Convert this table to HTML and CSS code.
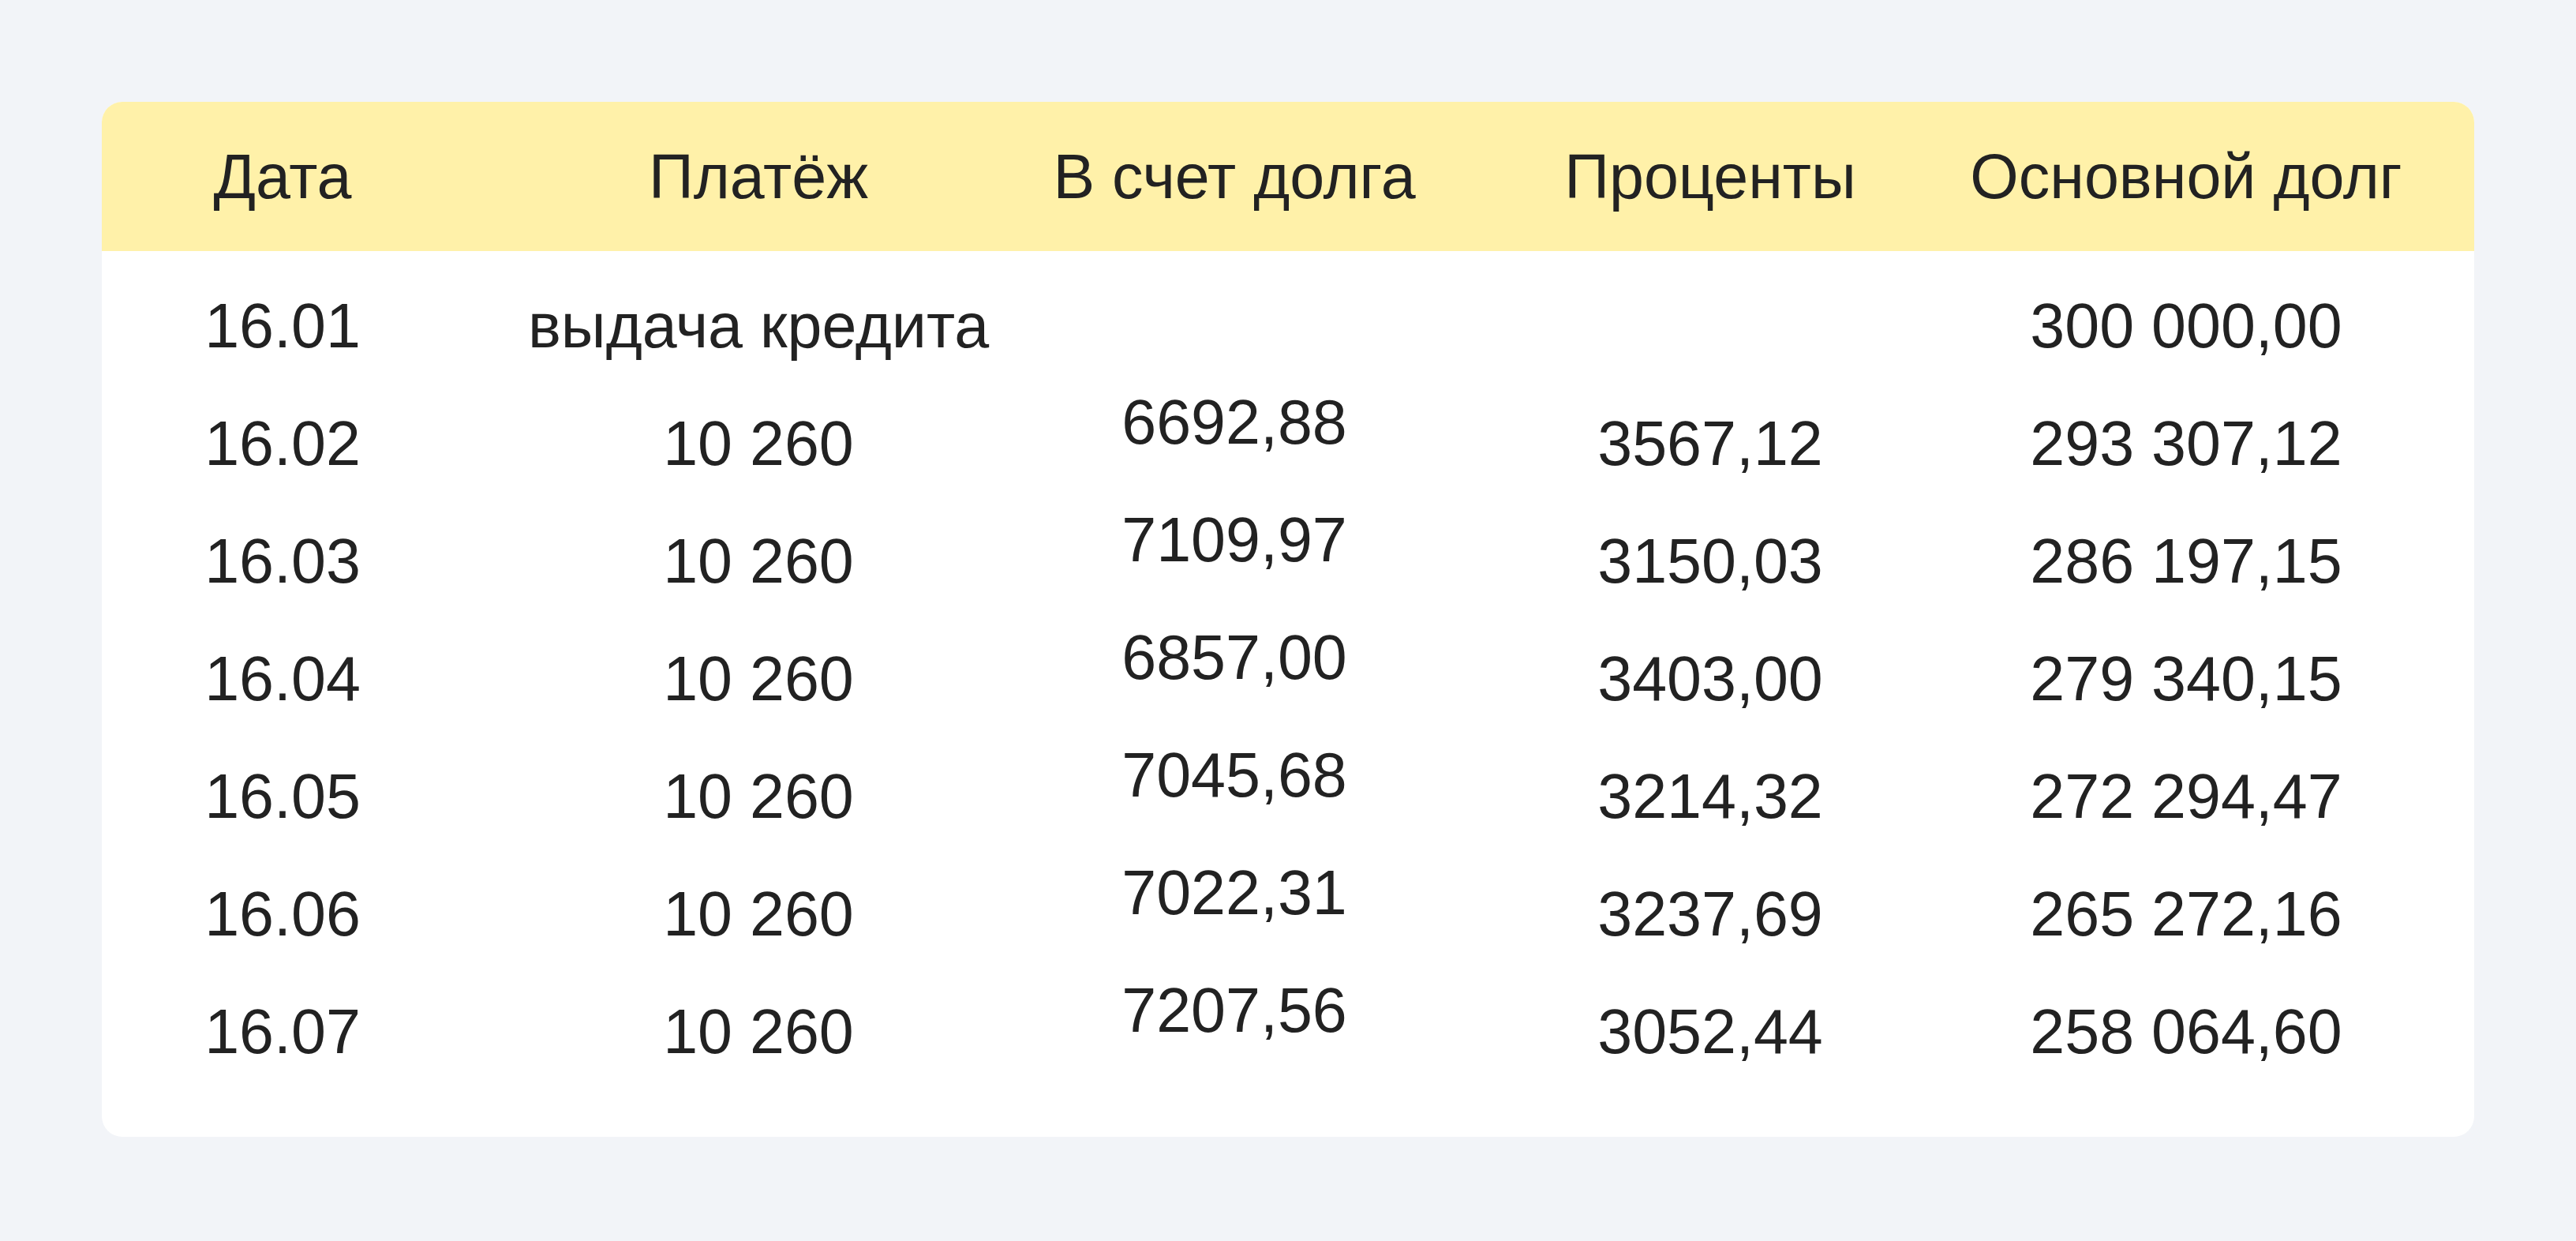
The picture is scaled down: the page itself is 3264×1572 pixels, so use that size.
FILE: index.html
```html
<!DOCTYPE html>
<html lang="ru">
<head>
<meta charset="utf-8">
<title>График платежей</title>
<link rel="stylesheet" href="styles.css">
</head>
<body>
<div class="page">
  <div class="card">
    <div class="row head">
      <div class="cell">Дата</div>
      <div class="cell">Платёж</div>
      <div class="cell">В счет долга</div>
      <div class="cell">Проценты</div>
      <div class="cell">Основной долг</div>
    </div>
    <div class="body">
      <div class="row">
        <div class="cell">16.01</div>
        <div class="cell">выдача кредита</div>
        <div class="cell up"></div>
        <div class="cell"></div>
        <div class="cell">300 000,00</div>
      </div>
      <div class="row">
        <div class="cell">16.02</div>
        <div class="cell">10 260</div>
        <div class="cell up">6692,88</div>
        <div class="cell">3567,12</div>
        <div class="cell">293 307,12</div>
      </div>
      <div class="row">
        <div class="cell">16.03</div>
        <div class="cell">10 260</div>
        <div class="cell up">7109,97</div>
        <div class="cell">3150,03</div>
        <div class="cell">286 197,15</div>
      </div>
      <div class="row">
        <div class="cell">16.04</div>
        <div class="cell">10 260</div>
        <div class="cell up">6857,00</div>
        <div class="cell">3403,00</div>
        <div class="cell">279 340,15</div>
      </div>
      <div class="row">
        <div class="cell">16.05</div>
        <div class="cell">10 260</div>
        <div class="cell up">7045,68</div>
        <div class="cell">3214,32</div>
        <div class="cell">272 294,47</div>
      </div>
      <div class="row">
        <div class="cell">16.06</div>
        <div class="cell">10 260</div>
        <div class="cell up">7022,31</div>
        <div class="cell">3237,69</div>
        <div class="cell">265 272,16</div>
      </div>
      <div class="row">
        <div class="cell">16.07</div>
        <div class="cell">10 260</div>
        <div class="cell up">7207,56</div>
        <div class="cell">3052,44</div>
        <div class="cell">258 064,60</div>
      </div>
    </div>
  </div>
</div>
</body>
</html>
```
FILE: styles.css
```css
html, body {
  margin: 0;
  padding: 0;
  background: #f2f4f8;
}
.page {
  padding: 129px 0 0 129px;
  width: 3264px;
  height: 1572px;
  box-sizing: border-box;
}
.card {
  width: 3006px;
  background: #ffffff;
  border-radius: 26px;
  overflow: hidden;
  font-family: "Liberation Sans", Arial, sans-serif;
  color: #222222;
  font-size: 79px;
}
.row {
  display: grid;
  grid-template-columns: repeat(5, 458px);
  column-gap: 145px;
  height: 149px;
  align-items: center;
}
.head {
  background: #fff1a9;
  height: 189px;
}
.body {
  padding: 20px 0 59px;
}
.cell {
  display: flex;
  justify-content: center;
  white-space: nowrap;
  line-height: 1;
}
.up {
  padding-bottom: 54px;
}
```
